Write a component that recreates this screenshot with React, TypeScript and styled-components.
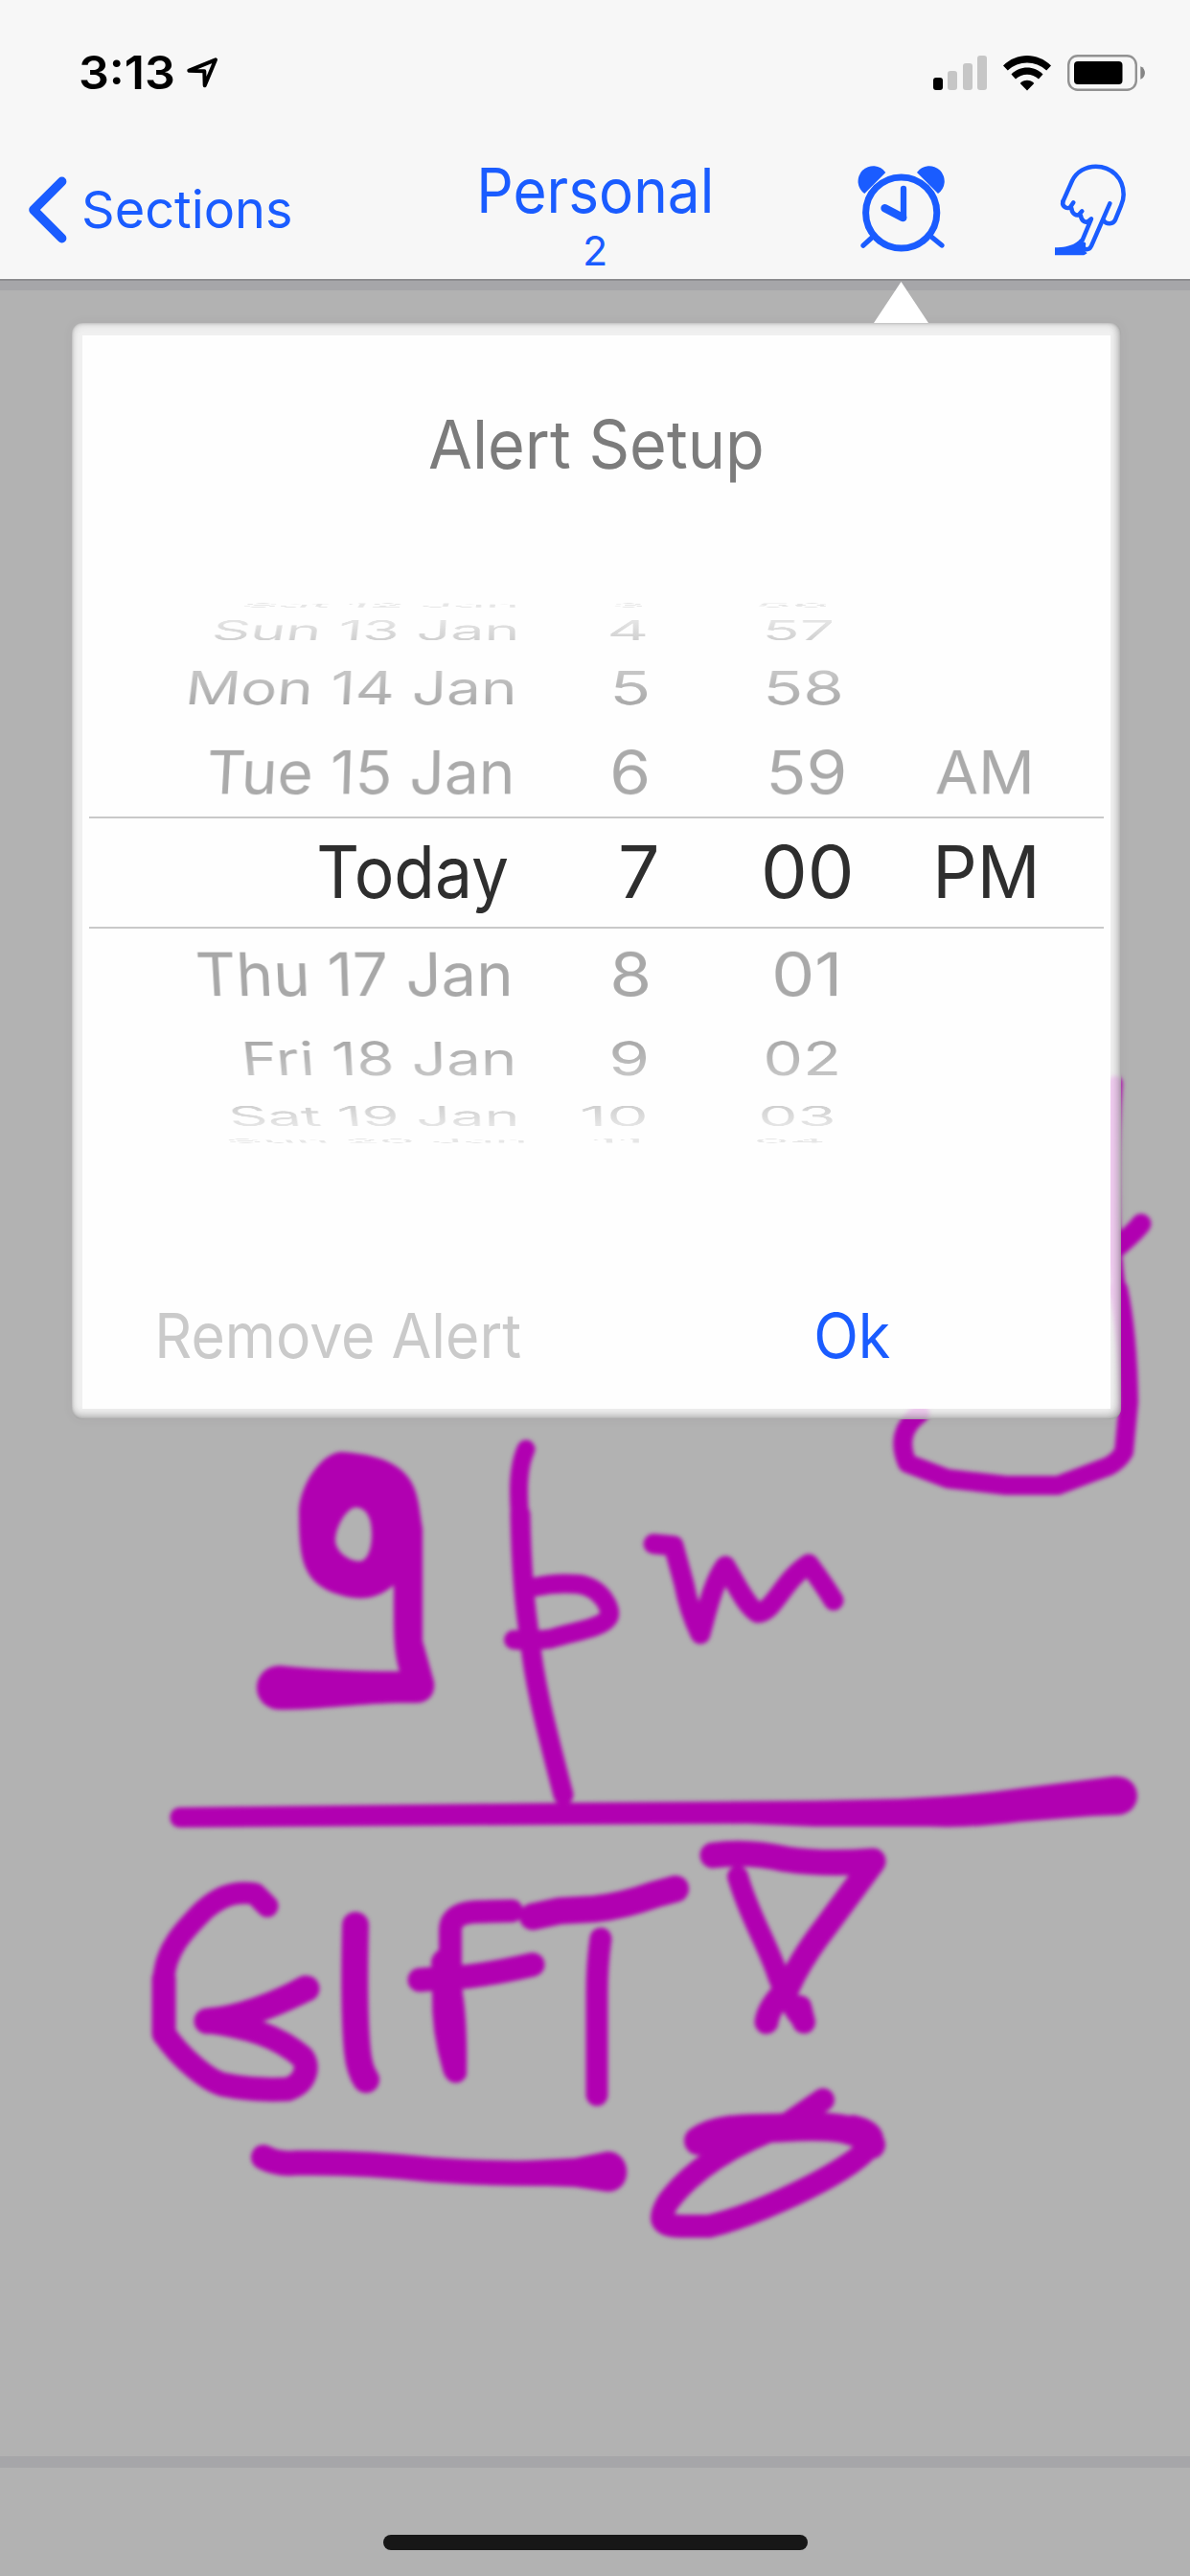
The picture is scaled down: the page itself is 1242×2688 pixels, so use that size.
import React, { useMemo } from "react";
import styled, { createGlobalStyle } from "styled-components";

const BLUE = "#1a5cff";
const INK = "#b100b1";
const FAMILY = 'Inter, Roboto, "Liberation Sans", sans-serif';

const GlobalStyle = createGlobalStyle`
  html, body { margin: 0; padding: 0; background: #b2b2b2; }
  * { box-sizing: border-box; }
  body { font-family: ${FAMILY}; }
`;

/* ---------- Text that fills an exact ink width ---------- */

const measure = (text: string, size: number, weight: number) => {
  const ctx = document.createElement("canvas").getContext("2d")!;
  ctx.font = `${weight} ${size}px ${FAMILY}`;
  const m = ctx.measureText(text);
  return { left: m.actualBoundingBoxLeft, ink: m.actualBoundingBoxLeft + m.actualBoundingBoxRight };
};

const FitBox = styled.span<{ $width: number; $size: number; $weight: number }>`
  display: block;
  flex: none;
  width: ${(p) => p.$width}px;
  height: ${(p) => p.$size}px;
  font-size: ${(p) => p.$size}px;
  line-height: ${(p) => p.$size}px;
  font-weight: ${(p) => p.$weight};
  white-space: nowrap;
`;

const FitInner = styled.span`
  display: inline-block;
  transform-origin: 0 50%;
`;

function Fit({ text, width, size, weight = 400 }: { text: string; width: number; size: number; weight?: number }) {
  const style = useMemo(() => {
    const { left, ink } = measure(text, size, weight);
    return { transform: `scaleX(${width / ink}) translateX(${left}px)` };
  }, [text, width, size, weight]);
  return (
    <FitBox $width={width} $size={size} $weight={weight}>
      <FitInner style={style}>{text}</FitInner>
    </FitBox>
  );
}

/* ---------- Page frame ---------- */

const Screen = styled.div`
  position: relative;
  display: flex;
  flex-direction: column;
  width: 1242px;
  height: 2688px;
  background: #b2b2b2;
  overflow: hidden;
`;

const Header = styled.header`
  flex: none;
  height: 291px;
  background: #f7f7f7;
  border-bottom: 1px solid #fff;
`;

const StatusBar = styled.div`
  display: flex;
  align-items: center;
  height: 132px;
  padding: 20px 46px 0 84px;
  color: #000;
`;

const LocationIcon = styled.svg`
  width: 36px;
  height: 36px;
  margin-left: 12px;
`;

const StatusIcons = styled.div`
  display: flex;
  align-items: center;
  gap: 17px;
  margin-left: auto;
`;

const Signal = styled.div`
  display: flex;
  align-items: flex-end;
  gap: 5.3px;
  height: 36px;
`;

const SignalBar = styled.i<{ $height: number; $on?: boolean }>`
  width: 10px;
  height: ${(p) => p.$height}px;
  border-radius: 3px;
  background: ${(p) => (p.$on ? "#000" : "#c6c6c6")};
`;

const NavBar = styled.nav`
  display: grid;
  grid-template-columns: 500px 240px 1fr;
  height: 158px;
  color: ${BLUE};
`;

const BackButton = styled.div`
  display: flex;
  align-items: center;
  gap: 16px;
  height: 158px;
  padding: 16px 0 0 28px;
`;

const TitleStack = styled.div`
  display: flex;
  flex-direction: column;
  align-items: center;
  gap: 10px;
  padding: 35px 0 0 2px;
`;

const Actions = styled.div`
  display: flex;
  padding: 34px 0 0 150px;
`;

const HandIcon = styled.svg`
  width: 77px;
  height: 102px;
  margin-left: 110px;
`;

const Divider = styled.div<{ $top?: boolean }>`
  flex: none;
  height: 12px;
  background: #a6a6a9;
  border-top: ${(p) => (p.$top ? "2px solid #8d8d90" : "none")};
`;

const Canvas = styled.main`
  position: relative;
  flex: none;
  height: 2260px;
`;

const InkLayer = styled.svg`
  position: absolute;
  inset: 0;
  width: 1242px;
  height: 2260px;
  fill: none;
  stroke: ${INK};
  stroke-linecap: round;
  stroke-linejoin: round;
  filter: blur(2px);
`;

const Footer = styled.footer`
  display: flex;
  justify-content: center;
  padding-top: 70px;
`;

const HomeIndicator = styled.div`
  width: 443px;
  height: 16px;
  border-radius: 8px;
  background: #171717;
`;

/* ---------- Alert popover ---------- */

const Arrow = styled.div`
  position: absolute;
  top: -9px;
  left: 912px;
  width: 57px;
  height: 43px;
  background: #fff;
  clip-path: polygon(50% 0, 100% 100%, 0 100%);
`;

const Popover = styled.section`
  position: absolute;
  top: 34px;
  left: 75px;
  width: 1095px;
  height: 1144px;
  padding: 13px 11px 11px;
  border-radius: 11px;
  background: rgba(255, 255, 255, 0.8);
  box-shadow: inset 0 0 3px rgba(0, 0, 0, 0.22), inset -3px -4px 9px rgba(0, 0, 0, 0.26),
    inset 1px 2px 8px rgba(0, 0, 0, 0.1), 0 0 12px rgba(90, 70, 80, 0.06);
`;

const PopoverBody = styled.div`
  display: flex;
  flex-direction: column;
  width: 1073px;
  height: 1120px;
  background: #fefefe;
`;

const PopoverTitle = styled.h1`
  display: flex;
  justify-content: center;
  height: 274px;
  margin: 0;
  padding: 79px 3px 0 0;
  color: #7c7c7c;
`;

const Wheel = styled.div`
  display: flex;
  flex-direction: column;
`;

const WheelRow = styled.div<{ $height: number; $from: string; $to?: string; $selected?: boolean }>`
  display: flex;
  align-items: center;
  height: ${(p) => p.$height}px;
  margin: 0 7px;
  padding-bottom: ${(p) => (p.$selected ? 2 : 0)}px;
  border: solid #c9c9c9;
  border-width: ${(p) => (p.$selected ? "2px 0" : "0")};
  color: ${(p) => p.$from};
  --ink: linear-gradient(${(p) => p.$from}, ${(p) => p.$to ?? p.$from});
`;

const WheelCell = styled.div<{ $gap: number; $tilt: number; $clip: boolean }>`
  flex: none;
  margin-left: ${(p) => p.$gap}px;
  transform-origin: 100% 50%;
  transform: ${(p) => (p.$tilt ? `perspective(3500px) rotateX(${p.$tilt}deg)` : "none")};
  ${FitInner} {
    background: ${(p) => (p.$clip ? "var(--ink)" : "none")};
    background-clip: text;
    -webkit-background-clip: text;
    color: ${(p) => (p.$clip ? "transparent" : "inherit")};
  }
`;

const Buttons = styled.div`
  display: flex;
  align-items: center;
  padding: 165px 0 0 80px;
`;

const TextButton = styled.button<{ $color: string; $gap?: number }>`
  margin: 0 0 0 ${(p) => p.$gap ?? 0}px;
  padding: 0;
  border: 0;
  background: none;
  font-family: inherit;
  color: ${(p) => p.$color};
`;

type Cell = [text: string, left: number, right: number];
interface Row {
  height: number;
  tilt: number;
  from: string;
  to?: string;
  selected?: boolean;
  cells: Cell[];
}

/* Date, hour, minute and meridiem of each visible slot, top to bottom. */
const ROWS: Row[] = [
  { height: 14, tilt: 85.8, from: "#e6e6e6", cells: [["Sat 12 Jan", 256, 538], ["3", 642, 670], ["56", 792, 863]] },
  { height: 38, tilt: 68, from: "#e9e9e9", to: "#cccccc", cells: [["Sun 13 Jan", 225, 538], ["4", 637, 674], ["57", 800, 868]] },
  { height: 83, tilt: 50.5, from: "#cccccc", to: "#a4a4a4", cells: [["Mon 14 Jan", 199, 535], ["5", 641, 676], ["58", 801, 877]] },
  { height: 93, tilt: 34, from: "#aaaaaa", cells: [["Tue 15 Jan", 218, 533], ["6", 640, 676], ["59", 804, 881], ["AM", 977, 1075]] },
  { height: 117, tilt: 0, from: "#2e2e2e", selected: true, cells: [["Today", 333, 530], ["7", 648, 685], ["00", 798, 887], ["PM", 979, 1080]] },
  { height: 94, tilt: -34, from: "#a8a8a8", cells: [["Thu 17 Jan", 207, 531], ["8", 640, 676], ["01", 809, 873]] },
  { height: 82, tilt: -50.5, from: "#a4a4a4", to: "#cacaca", cells: [["Fri 18 Jan", 257, 535], ["9", 639, 675], ["02", 800, 874]] },
  { height: 38, tilt: -68, from: "#cccccc", to: "#e9e9e9", cells: [["Sat 19 Jan", 242, 538], ["10", 608, 673], ["03", 795, 869]] },
  { height: 14, tilt: -85.8, from: "#e6e6e6", cells: [["Sun 20 Jan", 239, 547], ["11", 620, 667], ["04", 790, 859]] },
];
const WHEEL_LEFT = 93;

function PickerRow({ row }: { row: Row }) {
  return (
    <WheelRow $height={row.height} $from={row.from} $to={row.to} $selected={row.selected}>
      {row.cells.map(([text, left, right], i) => {
        const previous = i ? row.cells[i - 1][2] : WHEEL_LEFT;
        return (
          <WheelCell key={text} $gap={left - previous} $tilt={row.tilt} $clip={!!row.to}>
            <Fit text={text} width={right - left} size={75} />
          </WheelCell>
        );
      })}
    </WheelRow>
  );
}

/* ---------- Handwriting: [path, stroke width] ---------- */

const STROKES: [string, number][] = [
  // tail of the letter behind the popover
  ["M1164 1130C1162 1160 1160 1200 1161 1250C1161 1290 1164 1320 1168 1350", 15],
  ["M1191 1277Q1180 1291 1150 1314", 21],
  ["M1167 1345Q1177 1390 1178 1463L1173 1515Q1168 1524 1157 1530L1104 1550H1050L989 1543L947 1527Q933 1495 960 1475", 20],
  // p
  ["M549 1512C538 1536 542 1570 543 1590", 19],
  ["M543 1580C544 1630 548 1680 553 1710C557 1750 565 1785 588 1873", 21],
  ["M558 1656Q580 1651 603 1653C628 1656 640 1680 635 1688C628 1699 600 1702 575 1710Q553 1713 536 1711", 20],
  // m
  ["M682 1611L703 1613L714 1653Q719 1680 731 1705C738 1680 744 1652 757 1634C767 1650 779 1677 791 1683C808 1682 816 1650 844 1632Q859 1652 870 1670", 21],
  // G
  ["M279 1989L266 1976C240 1972 225 1983 213 1993C192 2014 172 2035 171 2065V2124", 23],
  ["M171 2065V2122C190 2150 218 2171 232 2175Q265 2182 300 2180C322 2173 322 2153 315 2146C290 2125 260 2115 216 2109C250 2107 290 2090 318 2074", 25],
  ["M216 2109C250 2107 290 2090 320 2075", 27],
  // I
  ["M371 2009C370 2050 370 2110 373 2140Q375 2160 382 2170", 28],
  // F
  ["M534 1994L497 1995Q470 1996 470 2014V2050", 24],
  ["M438 2066L465 2064Q500 2063 556 2050", 25],
  // T
  ["M556 2000L584 1994L620 1992Q650 1989 683 1977L705 1971", 28],
  ["M627 2023Q623 2050 623 2080V2186", 23],
  // ribbon
  ["M744 1936Q780 1931 820 1940Q860 1946 911 1942", 27],
  ["M911 1944L863 2009Q835 2045 822 2075Q802 2094 800 2110", 25],
  ["M770 1958C782 2000 802 2030 812 2062Q822 2090 839 2110", 22],
  ["M835 2094L839 2110", 24],
  // underline of the last word
  ["M275 2251Q290 2259 310 2257Q380 2256 450 2264Q530 2270 630 2267", 26],
  // loop
  ["M859 2191L821 2217C770 2235 725 2260 697 2298C684 2320 693 2323 715 2323H740C780 2314 850 2283 888 2257C920 2234 914 2225 890 2219", 24],
  ["M729 2234C750 2218 790 2222 820 2220Q870 2217 890 2224Q906 2228 909 2238", 30],
];

const NINE =
  "M356 1515C385 1517 405 1522 420 1535C437 1550 437 1572 441 1595V1712L453 1755C455 1770 445 1777 434 1777C380 1776 340 1784 292 1784C260 1783 260 1739 292 1738C335 1742 370 1744 417 1744C410 1720 411 1700 411 1654C390 1672 370 1670 345 1661C315 1647 312 1625 312 1575C315 1545 337 1516 356 1515ZM371 1573C363 1573 350 1592 350 1608C351 1620 365 1629 374 1629C384 1630 388 1615 388 1601C388 1580 380 1573 371 1573Z";
const RULE =
  "M188 1886L600 1881L850 1879L940 1877Q1010 1874 1065 1866L1160 1854C1195 1850 1195 1894 1165 1894L1140 1895L1065 1901Q1010 1908 970 1906H850L780 1903L600 1904L188 1907C174 1907 174 1886 188 1886Z";
const F_STEM = "M450 2046C454 2028 480 2028 481 2050L483 2080Q488 2110 487 2165C483 2177 466 2177 462 2160Q450 2120 451 2080Z";
const RULE_END = "M540 2255L600 2252L634 2245C660 2245 662 2287 634 2287L600 2282L540 2280Z";

function Handwriting() {
  return (
    <InkLayer viewBox="0 303 1242 2260">
      {STROKES.map(([d, w]) => (
        <path key={d} d={d} strokeWidth={w} />
      ))}
      {[NINE, RULE, F_STEM, RULE_END].map((d) => (
        <path key={d} d={d} fill={INK} fillRule="evenodd" stroke="none" />
      ))}
    </InkLayer>
  );
}

export default function App() {
  return (
    <Screen>
      <GlobalStyle />
      <Header>
        <StatusBar>
          <Fit text="3:13" width={97} size={48.5} weight={600} />
          <LocationIcon viewBox="193 58 36 36" fill="none" stroke="#000" strokeWidth="4" strokeLinejoin="round">
            <path d="M225 62.3L197.3 73.7L213.3 74.3L213.7 89.3Z" />
          </LocationIcon>
          <StatusIcons>
            <Signal>
              <SignalBar $height={13} $on />
              <SignalBar $height={20} />
              <SignalBar $height={28} />
              <SignalBar $height={36} />
            </Signal>
            <svg width="50" height="37" viewBox="0 0 50 37">
              <path d="M0 10.5C14 -3.5 36 -3.5 50 10.5L45.2 15.5C34 4.8 16 4.8 4.8 15.5Z" />
              <path d="M8.5 19.5C17.5 10.2 32.5 10.2 41.5 19.5L37 24.5C30.3 18.2 19.7 18.2 13 24.5Z" />
              <path d="M17.7 29C21.5 24.7 28.5 24.7 32.3 29L25 36.5Z" />
            </svg>
            <svg width="82" height="38" viewBox="0 0 82 38">
              <rect x="1.2" y="1.2" width="70.6" height="35.6" rx="9.5" fill="none" stroke="#929292" strokeWidth="2.4" />
              <rect x="7" y="7" width="50.5" height="24" rx="4" />
              <path d="M76.3 12.3C82.5 14.5 82.5 23.5 76.3 25.8Z" fill="#858585" />
            </svg>
          </StatusIcons>
        </StatusBar>
        <NavBar>
          <BackButton>
            <svg width="44" height="72" viewBox="28 183 44 72" fill="none" stroke={BLUE} strokeWidth="9.6" strokeLinecap="round" strokeLinejoin="round">
              <path d="M64.6 189.4L35 219L64.6 248.7" />
            </svg>
            <Fit text="Sections" width={215} size={54} />
          </BackButton>
          <TitleStack>
            <Fit text="Personal" width={239} size={64} />
            <Fit text="2" width={20.5} size={42} />
          </TitleStack>
          <Actions>
            <svg width="100" height="98" viewBox="890 166 100 98" fill="none" stroke={BLUE} strokeLinecap="round" strokeLinejoin="round">
              <circle cx="940.7" cy="222" r="37.1" strokeWidth="7" />
              <path d="M924.3 180A15.8 15.8 0 1 0 902.3 202Z" fill={BLUE} stroke="none" />
              <path d="M957 180A15.8 15.8 0 1 1 979 202Z" fill={BLUE} stroke="none" />
              <path d="M943 197V227.5" strokeWidth="6.3" />
              <path d="M923.5 217.3L942.2 227" strokeWidth="8.4" />
              <path d="M911 247L901 256.2M972 247L983 256" strokeWidth="5.2" />
            </svg>
            <HandIcon viewBox="780 440 231 306" fill="none" stroke={BLUE} strokeWidth="13.5" strokeLinecap="round" strokeLinejoin="round">
              <path d="M808 573L837 508C850 480 880 463 911 463C960 463 998 500 998 551C998 565 995 575 990 586L972 630C966 645 944 645 936 633" />
              <path d="M955 579L897 712C890 727 868 727 873 706" />
              <path d="M808 573C804 592 826 598 832 589L841 576M835 594C836 612 852 620 860 612L868 603M864 617C866 636 881 640 888 634L897 627L869 694" />
              <path d="M783 717C820 717 850 707 862 690L872 695L868 718L884 735L874 741H783Z" fill={BLUE} stroke="none" />
            </HandIcon>
          </Actions>
        </NavBar>
      </Header>
      <Divider $top />
      <Canvas>
        <Handwriting />
        <Popover>
          <PopoverBody>
            <PopoverTitle>
              <Fit text="Alert Setup" width={347} size={70} />
            </PopoverTitle>
            <Wheel>
              {ROWS.map((row) => (
                <PickerRow key={row.cells[0][0]} row={row} />
              ))}
            </Wheel>
            <Buttons>
              <TextButton $color="#cacaca">
                <Fit text="Remove Alert" width={377} size={64.5} />
              </TextButton>
              <TextButton $color={BLUE} $gap={309}>
                <Fit text="Ok" width={77} size={64.5} />
              </TextButton>
            </Buttons>
          </PopoverBody>
        </Popover>
        <Arrow />
      </Canvas>
      <Divider />
      <Footer>
        <HomeIndicator />
      </Footer>
    </Screen>
  );
}
